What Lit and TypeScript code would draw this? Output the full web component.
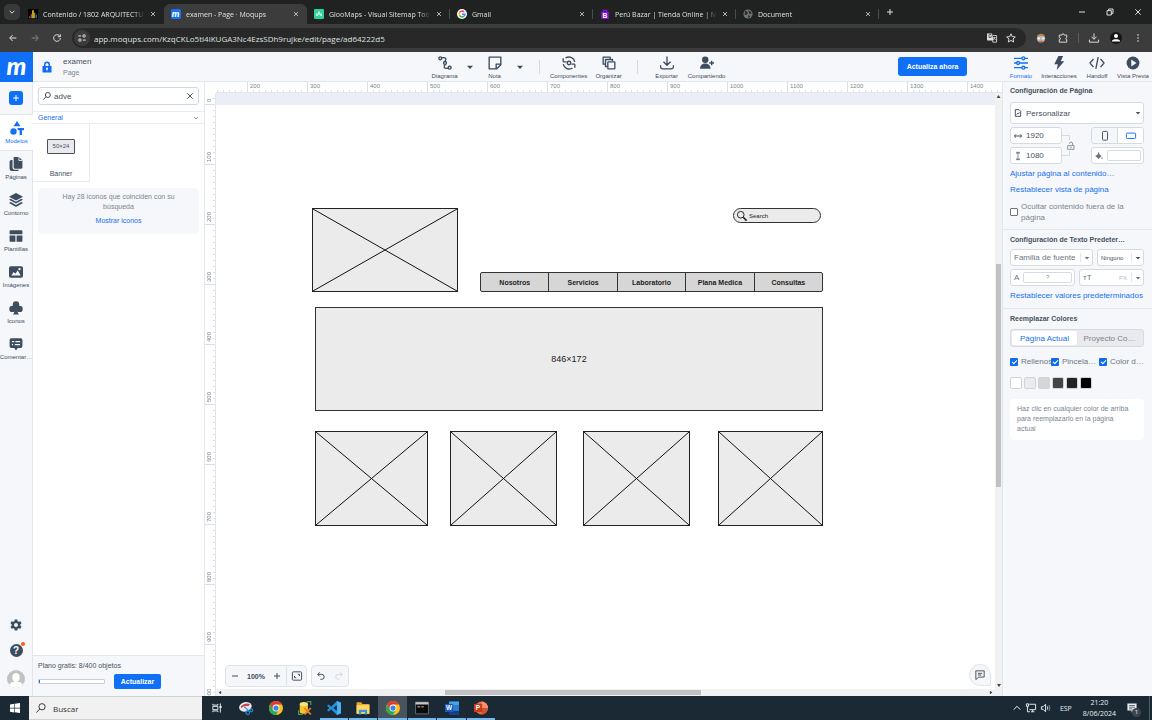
import { LitElement, html, css, svg, nothing } from "lit";
import { customElement } from "lit/decorators.js";
import { classMap } from "lit/directives/class-map.js";
import { styleMap } from "lit/directives/style-map.js";

const glyphs: Record<string, unknown> = {
  chevron: svg`<path class="ln" d="M5 8.500l7 7 7-7"/>`,
  close: svg`<path class="ln" d="M4 4l16 16M20 4L4 20"/>`,
  plus: svg`<path class="ln" d="M12 3v18M3 12h18"/>`,
  minus: svg`<path class="ln" d="M3 12h18"/>`,
  restore: svg`<path class="ln" d="M3 8h13v13H3zM8 8V3h13v13h-5"/>`,
  back: svg`<path class="ln" d="M22 12H3M11 3l-9 9 9 9"/>`,
  forward: svg`<path class="ln" d="M2 12h19M13 3l9 9-9 9"/>`,
  reload: svg`<path class="ln" d="M20 12a8 8 0 1 1-2.500-5.800L20 9M20 3v6h-6"/>`,
  tune: svg`<path class="ln" d="M3 7h7M14 17h7"/><circle class="ln" cx="17" cy="7" r="3"/><circle class="ln" cx="7" cy="17" r="3"/>`,
  star: svg`<path class="ln" d="M12 2l3 6.800 7.400.7-5.600 4.900 1.700 7.200-6.500-3.800-6.500 3.800 1.700-7.200-5.600-4.900 7.400-.7z"/>`,
  translate: svg`<path d="M0 1h12l4 17H2a2 2 0 0 1-2-2z"/><path class="ln thin" d="M14 6h9v16h-9l-1-4M15 11h6M18 10c0 4-2 5-3 6M17 13l4 4"/><text x="3" y="13" class="tiny">G</text>`,
  puzzle: svg`<path class="ln" d="M3 5h6c0-4 6-4 6 0h6v6c-3 0-3 5 0 5v6H3v-6c4 0 4-5 0-5z"/>`,
  download: svg`<path class="ln" d="M12 1v14M6 9l6 6 6-6M1 16v6h22v-6"/>`,
  dots: svg`<circle cx="12" cy="3" r="2.500"/><circle cx="12" cy="12" r="2.500"/><circle cx="12" cy="21" r="2.500"/>`,
  profile: svg`<circle cx="12" cy="12" r="12" fill="#151716"/><circle cx="12" cy="8" r="4" fill="#fff"/><path fill="#fff" d="M4 18c0-5 16-5 16 0v1H4z"/>`,
  face: svg`<circle cx="12" cy="13" r="10" fill="#e9b28c"/><path fill="#b9834d" d="M2 11C2-1 22-1 22 11l-5-4H7z"/><circle cx="7" cy="13" r="4" fill="#eef8fc" stroke="#62a9c2" stroke-width="1.500"/><circle cx="17" cy="13" r="4" fill="#eef8fc" stroke="#62a9c2" stroke-width="1.500"/><path d="M8 20h8" stroke="#b44" stroke-width="2"/>`,
  lock: svg`<path d="M3 10h18v13H3z"/><path class="ln" d="M7.500 11V7a4.500 4.500 0 0 1 9 0v4"/><circle cx="12" cy="15" r="2" fill="#fff"/><path fill="#fff" d="M11 15h2v4h-2z"/>`,
  unlock: svg`<path class="ln" d="M2 11h19v11H2zM17 10V6a5 5 0 0 0-10-1M12 14v5"/>`,
  shapes: svg`<path d="M12 0l6 9H6z"/><circle cx="6" cy="18" r="5.500"/><path d="M13 12h11v4h-3.500v8h-4v-8H13z"/>`,
  pages: svg`<path d="M8 0h9l6 6v12a2 2 0 0 1-2 2H10a2 2 0 0 1-2-2z"/><path d="M6 5H4a3 3 0 0 0-3 3v12a4 4 0 0 0 4 4h9a3 3 0 0 0 3-2H10a4 4 0 0 1-4-4z"/><path d="M17 0v6h6" fill="none" stroke="#f5f7fa" stroke-width="1.500"/>`,
  layers: svg`<path d="M12 0l12 6.500L12 13 0 6.500z"/><path d="M0 11.500L3 10l9 5 9-5 3 1.500L12 18z"/><path d="M0 17l3-1.500 9 5 9-5 3 1.500L12 24z"/>`,
  template: svg`<path d="M3 2h18a2 2 0 0 1 2 2v5H1V4a2 2 0 0 1 2-2zM1 11h10v11H3a2 2 0 0 1-2-2zM13 11h10v9a2 2 0 0 1-2 2h-8z"/>`,
  image: svg`<rect x="0" y="2" width="24" height="20" rx="3"/><path fill="#f5f7fa" d="M4 18l4-6 3 3 4-6 5 9z"/><circle cx="18" cy="7" r="2" fill="#f5f7fa"/>`,
  club: svg`<circle cx="12" cy="6" r="5.500"/><circle cx="6" cy="13.500" r="5.500"/><circle cx="18" cy="13.500" r="5.500"/><path d="M10 10h4c0 6 0 9 3 13H7c3-4 3-7 3-13z"/>`,
  comments: svg`<path d="M4 2h16a3 3 0 0 1 3 3v11a3 3 0 0 1-3 3h-5l-3 4-3-4H4a3 3 0 0 1-3-3V5a3 3 0 0 1 3-3z"/><path stroke="#f5f7fa" stroke-width="2.400" d="M5 8h4M11 8h8M5 13h2M10 13h9"/>`,
  gear: svg`<path fill-rule="evenodd" d="M9.500 1h5l.8 3.300 2.100 1.200 3.300-1 2.300 4.100-2.400 2.400v2l2.400 2.400-2.300 4.100-3.300-1-2.100 1.200-.8 3.300h-5l-.8-3.300-2.100-1.200-3.300 1L1 15.400 3.400 13v-2L1 8.600l2.300-4.100 3.300 1 2.100-1.200zM12 8a4 4 0 1 0 0 8 4 4 0 0 0 0-8z"/>`,
  avatar: svg`<circle cx="12" cy="12" r="12" fill="#c2c2c2"/><ellipse cx="12" cy="10" rx="5" ry="6" fill="#fff"/><path fill="#fff" d="M3 20c2-5 5-4 9-4s7-1 9 4a12 12 0 0 1-18 0z"/>`,
  search: svg`<circle class="ln" cx="14.500" cy="9" r="7.500"/><path class="ln" d="M9 14.500L1 23"/>`,
  searchR: svg`<circle class="ln" cx="9" cy="9" r="8"/><path class="ln thick" d="M15 15l8 8"/>`,
  caret: svg`<path d="M3 8h18l-9 10z"/>`,
  diagram: svg`<circle class="ln" cx="4" cy="4" r="2.500"/><circle class="ln" cx="12" cy="12" r="2.500"/><circle class="ln" cx="20" cy="20" r="2.500"/><path class="ln" d="M7 3c7-1 8 2 5 6M12 15c-3 4-2 7 5 6"/>`,
  note: svg`<path class="ln" d="M2 2h20v13l-7 7H2zM22 14h-8v8"/>`,
  component: svg`<circle class="ln" cx="12" cy="12" r="3"/><path class="ln" d="M6 3.500a10.500 10.500 0 0 1 16 6.500M18 20.500A10.500 10.500 0 0 1 2 14M2 10V4M2 10h6M22 14v6M22 14h-6"/>`,
  organize: svg`<path class="ln" d="M5 14H2V2h12v3M9 18H6V6h12v3"/><rect class="ln" x="10" y="10" width="12" height="12" rx="1"/>`,
  export: svg`<path class="ln" d="M12 1v14M6 10l6 6 6-6M1 16c0 5 0 6 5 6h12c5 0 5-1 5-6"/>`,
  share: svg`<circle cx="9" cy="6.500" r="5.500"/><path d="M0 22c0-12 18-12 18 0z"/><path class="ln" d="M20 8v8M16 12h8"/>`,
  format: svg`<path class="ln" d="M0 4h24M0 12h24M0 20h24"/><circle class="ln fill" cx="16" cy="4" r="2.500"/><circle class="ln fill" cx="7" cy="12" r="2.500"/><circle class="ln fill" cx="16" cy="20" r="2.500"/>`,
  bolt: svg`<path d="M11 0h8l-4 9h6L8 24l2-10H4z"/>`,
  code: svg`<path class="ln" d="M6 5l-6 7 6 7M18 5l6 7-6 7M14 2l-4 20"/>`,
  play: svg`<circle cx="12" cy="12" r="11"/><path fill="#f5f7fa" d="M9 6l9 6-9 6z"/>`,
  file: svg`<path class="ln" d="M4 2h11l5 5v15H4zM8 17l3-4 2 2 3-5"/>`,
  width: svg`<path class="ln" d="M1 12h22M6 7l-5 5 5 5M18 7l5 5-5 5"/>`,
  height: svg`<path class="ln thin" d="M12 2v20M7 6l5-5 5 5M7 18l5 5 5-5M6 1h12M6 23h12"/>`,
  portrait: svg`<rect class="ln" x="6" y="1" width="12" height="21" rx="2"/>`,
  landscape: svg`<rect class="ln" x="1" y="5" width="22" height="13" rx="2"/>`,
  bucket: svg`<path d="M2 13L11 4l8 9-8 8z"/><path class="ln" d="M11 1v7M2 12h17"/><path d="M21 15l2 4a2 2 0 0 1-4 0z"/>`,
  fit: svg`<rect class="ln" x="1" y="2" width="22" height="20" rx="2"/><path class="ln" d="M14 8h4v4M10 16H6v-4"/>`,
  undo: svg`<path class="ln" d="M8 1L2 7l6 6M3 7h11a7.500 7.500 0 1 1 0 15h-4"/>`,
  redo: svg`<path class="ln" d="M16 1l6 6-6 6M21 7H10a7.500 7.500 0 1 0 0 15h4"/>`,
  chat: svg`<path class="ln" d="M2 2h20v15H9l-7 6zM7 8h10M7 12h8"/>`,
  windows: svg`<path d="M0 3.500L10 2v9.500H0zM11.500 1.800L24 0v11.500H11.500zM0 13h10v9.500L0 21zM11.500 13H24v11l-12.500-1.800z"/>`,
  taskview: svg`<path class="ln" d="M2 2v3h12V2M2 22v-3h12v3M2 8h12v8H2zM20 1v22"/><path d="M18 7h5v5h-5z"/>`,
  up: svg`<path class="ln" d="M2 17l10-10 10 10"/>`,
  network: svg`<path class="ln" d="M8 3h15v13H8M12 21h8M16 16v5M1 2h5v6H1zM3.500 8v13h6"/>`,
  sound: svg`<path class="ln" d="M1 9h4l6-6v18l-6-6H1zM15 8q3 4 0 8"/><path class="ln" opacity=".5" d="M19 5q5 7 0 14"/>`,
  notify: svg`<path d="M1 1h22v17h-7l-5 5v-5H1z"/><path stroke="#1b2935" stroke-width="1.500" d="M5 6h14M5 10h14M5 14h8"/>`,
  chrome: svg`<circle cx="12" cy="12" r="12" fill="#fbc116"/><path fill="#e33b2e" d="M1.600 6A12 12 0 0 1 22.400 6H12l-5 9z"/><path fill="#2da94f" d="M1.600 6A12 12 0 0 0 12 24l5-9-10 0z"/><circle cx="12" cy="12" r="5.800" fill="#fff"/><circle cx="12" cy="12" r="4.500" fill="#3f82ee"/>`,
  snip: svg`<ellipse cx="11" cy="10" rx="11" ry="8" fill="#e8e8ea" transform="rotate(-15 11 10)"/><path d="M3 9q7-7 16-4l-3 4q-6-2-12 3z" fill="#c9474d"/><circle cx="15" cy="20" r="3" fill="none" stroke="#2788d2" stroke-width="2"/><circle cx="21" cy="16" r="2.500" fill="none" stroke="#2788d2" stroke-width="2"/><path d="M9 10l8 7" stroke="#2788d2" stroke-width="2"/>`,
  db: svg`<path d="M3 5v14c0 4 14 4 14 0V5z" fill="#f3c535"/><ellipse cx="10" cy="5" rx="7" ry="3.500" fill="#ffe27a"/><path d="M15 1h7v6M1 16v7h7" fill="none" stroke="#4d9b3f" stroke-width="2"/><path d="M11 12l11 11M22 12L11 23" stroke="#ef7d22" stroke-width="3"/>`,
  vscode: svg`<path fill="#2490dc" d="M17 0l7 3v18l-7 3L7 14l-4 4-3-2 4-4-4-4 3-2 4 4zM17.500 7L11 12l6.500 5z" fill-rule="evenodd"/><path fill="#47b3f4" d="M17 0l7 3v18l-7 3z"/>`,
  folder: svg`<path fill="#e8a72c" d="M1 2h8l2 3h12v17H1z"/><path fill="#ffd765" d="M1 7h22v15H1z"/><path fill="#3b96dc" d="M5 23v-8h14v8h-4v-4H9v4z"/>`,
  terminal: svg`<path fill="#0a0a0a" stroke="#9a9a9a" d="M1 2h22v20H1z"/><path fill="#c8c8c8" d="M1 2h22v4H1z"/><path stroke="#ddd" stroke-width="1.500" d="M4 10h5M11 10h4"/>`,
  word: svg`<path fill="#2b7cd3" d="M7 1h17v22H7z"/><path fill="#41a5ee" d="M7 1h17v6H7z"/><path fill="#103f91" d="M7 17h17v6H7z"/><path fill="#185abd" d="M0 5h14v14H0z"/><text x="1.500" y="16" class="badge">W</text>`,
  ppt: svg`<circle cx="13" cy="12" r="11" fill="#ed6c47"/><path d="M13 1a11 11 0 0 1 11 11H13z" fill="#ff8f6b"/><path d="M13 23a11 11 0 0 0 11-11H13z" fill="#d35230"/><path fill="#c43e1c" d="M0 5h14v14H0z"/><text x="3" y="16" class="badge">P</text>`,
  favBars: svg`<path fill="#000" d="M0 0h24v24H0z"/><path stroke="#1b9e8a" stroke-width="3" d="M4 22v-4"/><path stroke="#e23d2e" stroke-width="3" d="M8 22V12"/><path stroke="#f5b921" stroke-width="4" d="M12 22V3"/><path stroke="#6cb23f" stroke-width="3" d="M16 22V9"/><path stroke="#4a55c4" stroke-width="3" d="M20 22v-8"/>`,
  favMoqups: svg`<rect width="24" height="24" rx="4" fill="#1273f8"/><text x="2" y="18" class="logo">m</text>`,
  favGloo: svg`<rect width="24" height="24" rx="3" fill="#2fd39a"/><path fill="#c8f7e4" d="M10 6h4v5h5v6h-4v-3H9v3H5v-6h5z"/>`,
  favGoogle: svg`<circle cx="12" cy="12" r="12" fill="#fff"/><g fill="none" stroke-width="3.500"><path stroke="#ea4335" d="M6 8.500A7 7 0 0 1 17 7"/><path stroke="#fbbc05" d="M6 8.500a7 7 0 0 0 0 7"/><path stroke="#34a853" d="M6 15.500A7 7 0 0 0 17 17"/><path stroke="#4285f4" d="M17 17q2-2 2-4.500h-7"/></g>`,
  favBazar: svg`<path fill="#8a10ea" d="M3 7h18v17H3z"/><path fill="none" stroke="#8a10ea" stroke-width="3" d="M8 8V3h8v5"/><text x="6" y="21" class="bazar">B</text>`,
  favGlobe: svg`<circle cx="12" cy="12" r="11" fill="#6f7376"/><path fill="#2a2d2d" d="M5 5q7 1 6 6t-7 3M13 3q7 3 8 8l-6 1zM12 15l6 2-5 5z"/>`,
};

const icon = (name: string, cls = "") =>
  html`<svg class="icon ${cls}" viewBox="0 0 24 24" aria-hidden="true">${glyphs[name]}</svg>`;

const shared = css`
  *, *::before, *::after { box-sizing: border-box; }
  :host { box-sizing: border-box; font-family: "Liberation Sans", Arial, sans-serif; color: #46515f; }
  button { font: inherit; color: inherit; background: none; border: 0; padding: 0; margin: 0; display: inline-flex; align-items: center; justify-content: center; }
  a { color: #1670f0; text-decoration: none; }
  input, select { font: inherit; color: inherit; margin: 0; padding: 0; border: 0; background: none; outline: 0; min-width: 0; appearance: none; border-radius: 0; }
  .icon { width: 12px; height: 12px; flex: none; fill: currentColor; display: block; overflow: visible; }
  .icon.s6 { width: 6px; height: 6px; }
  .icon.s8 { width: 8px; height: 8px; }
  .icon.s10 { width: 10px; height: 10px; }
  .icon.s14 { width: 14px; height: 14px; }
  .icon.s18 { width: 18px; height: 18px; }
  .ln { fill: none; stroke: currentColor; stroke-width: 3; stroke-linejoin: round; }
  .s14 .ln, .s10 .ln { stroke-width: 2.3; }
  .ln.thin { stroke-width: 2; }
  .s10 .ln.thick { stroke-width: 4; }
  .ln.fill { fill: #f5f7fa; }
  .tiny { font: bold 11px "Liberation Sans", sans-serif; fill: #3b3b3b; }
  .badge { font: bold 11px "Liberation Sans", sans-serif; fill: #fff; }
  .bazar { font: bold 16px "Liberation Sans", sans-serif; fill: #fff; }
  .logo { font: italic 900 23px Lato, sans-serif; fill: #fff; }
`;

@customElement("browser-chrome")
class BrowserChrome extends LitElement {
  static styles = [shared, css`
    :host { display: block; flex: none; font-family: "Open Sans", sans-serif; color: #dfe1e0; background: #1f2221; }
    .strip { display: flex; align-items: center; height: 24px; }
    .list { width: 16px; height: 16px; margin: 0 1px 0 4px; border-radius: 5px; background: #373a39; }
    .tab { flex: 0 1 143px; min-width: 0; height: 20px; display: flex; align-items: center; gap: 5px; padding: 0 8px 0 7px; margin-top: 4px; font-size: 7px; border-radius: 6px 6px 0 0; position: relative; }
    .tab.active { background: #3c3c3c; }
    .tab.line::after { content: ""; width: 1px; height: 10px; background: #4a4d4c; position: absolute; right: 0; }
    .name { flex: 1; min-width: 0; white-space: nowrap; overflow: hidden; mask-image: linear-gradient(90deg, #000 88%, transparent); }
    .new { width: 22px; height: 20px; }
    .window { margin-left: auto; display: flex; }
    .window button { width: 28px; height: 24px; }
    .bar { height: 28px; background: #3c3c3c; display: flex; align-items: center; padding-left: 2px; }
    .nav { width: 22px; height: 22px; }
    .dim { color: #858585; }
    .omni { flex: 1; height: 20px; margin-left: 4px; padding: 0 10px 0 2px; border-radius: 10px; background: #282828; display: flex; align-items: center; gap: 9px; }
    .site { width: 16px; height: 16px; border-radius: 8px; background: #3c3c3c; }
    .url { flex: 1; font-size: 8px; margin-left: -5px; }
    .ext { display: flex; align-items: center; padding: 0 3px 0 4px; }
    .ext button { width: 22px; height: 22px; }
    .sep { width: 1px; height: 10px; background: #5c5c5c; margin: 0 4px; }
  `];
  private tabs = [
    ["favBars", "Contenido / 1802 ARQUITECTU"],
    ["favMoqups", "examen - Page · Moqups"],
    ["favGloo", "GlooMaps - Visual Sitemap Too"],
    ["favGoogle", "Gmail"],
    ["favBazar", "Perú Bazar | Tienda Online | Me"],
    ["favGlobe", "Document"],
  ];
  render() {
    return html`
      <div class="strip">
        <button class="list" aria-label="Buscar pestañas">${icon("chevron", "s8")}</button>
        ${this.tabs.map(([fav, name], i) => html`
          <div class=${classMap({ tab: true, active: i === 1, line: i > 1 })}>
            ${icon(fav, "s10")}<span class="name">${name}</span>
            <button aria-label="Cerrar ${name}">${icon("close", "s6")}</button>
          </div>`)}
        <button class="new" aria-label="Nueva pestaña">${icon("plus", "s8")}</button>
        <div class="window">
          <button aria-label="Minimizar">${icon("minus", "s8")}</button>
          <button aria-label="Restaurar">${icon("restore", "s8")}</button>
          <button aria-label="Cerrar">${icon("close", "s8")}</button>
        </div>
      </div>
      <div class="bar">
        <button class="nav" aria-label="Atrás">${icon("back", "s8")}</button>
        <button class="nav dim" aria-label="Adelante">${icon("forward", "s8")}</button>
        <button class="nav" aria-label="Recargar">${icon("reload", "s10")}</button>
        <div class="omni">
          <button class="site" aria-label="Información del sitio">${icon("tune", "s10")}</button>
          <input class="url" aria-label="Dirección" .value=${"app.moqups.com/KzqCKLo5tl4iKUGA3Nc4EzsSDh9rujke/edit/page/ad64222d5"} />
          <button aria-label="Traducir">${icon("translate", "s10")}</button>
          <button aria-label="Favorito">${icon("star", "s10")}</button>
        </div>
        <div class="ext">
          <button aria-label="Extensión">${icon("face", "s10")}</button>
          <button aria-label="Extensiones">${icon("puzzle", "s10")}</button>
          <span class="sep"></span>
          <button aria-label="Descargas">${icon("download", "s10")}</button>
          <button aria-label="Perfil">${icon("profile")}</button>
          <button aria-label="Menú">${icon("dots", "s8")}</button>
        </div>
      </div>`;
  }
}

@customElement("editor-header")
class EditorHeader extends LitElement {
  static styles = [shared, css`
    :host { display: flex; flex: none; height: 30px; background: #f5f7fa; border-bottom: 1px solid #e2e7ee; font-size: 6px; color: #3d4c5f; }
    .brand { width: 33px; height: 30px; flex: none; background: #0f70f7; color: #fff; display: flex; align-items: center; justify-content: center; font: italic 900 25px/24px Lato, sans-serif; padding-bottom: 4px; }
    .doc { flex: 9 1 0; display: flex; align-items: center; gap: 10px; padding-left: 8px; }
    .doc .icon { color: #0f6cf2; }
    .title { font-size: 8px; line-height: 11px; color: #46515f; }
    .kind { font-size: 7px; line-height: 11px; color: #7b8591; }
    .tools { display: flex; align-items: center; }
    .first { padding-right: 4px; display: flex; }
    .tool { flex-direction: column; gap: 2px; width: 40px; height: 29px; padding-top: 2px; line-height: 8px; white-space: nowrap; }
    .narrow { width: 36px; }
    .more { width: 14px; height: 29px; }
    .sep { width: 1px; height: 14px; background: #d5dae1; margin: 0 9px 0 8px; }
    .space { flex: 4 1 0; }
    .upgrade { width: 69px; height: 19px; margin: 5px 36px 0 0; border-radius: 3px; background: #0f70f7; color: #fff; font-weight: bold; font-size: 7px; }
    .modes { display: flex; width: 149px; flex: none; }
    .on { color: #1670f0; }
  `];
  private tool(glyph: string, label: string, cls = "") {
    return html`<button class="tool ${cls}">${icon(glyph, "s14")}<span>${label}</span></button>`;
  }
  render() {
    return html`
      <a class="brand" href="#" aria-label="Moqups">m</a>
      <div class="doc">${icon("lock", "")}<div><div class="title">examen</div><div class="kind">Page</div></div></div>
      <div class="tools">
        <div class="first">
          ${this.tool("diagram", "Diagrama", "narrow")}
          <button class="more" aria-label="Más diagramas">${icon("caret", "s8")}</button>
          ${this.tool("note", "Nota", "narrow")}
          <button class="more" aria-label="Más notas">${icon("caret", "s8")}</button>
        </div>
        <span class="sep"></span>
        ${this.tool("component", "Componentes")}${this.tool("organize", "Organizar")}
        <span class="sep"></span>
        ${this.tool("export", "Exportar")}${this.tool("share", "Compartiendo")}
      </div>
      <div class="space"></div>
      <button class="upgrade">Actualiza ahora</button>
      <div class="modes">
        ${this.tool("format", "Formato", "narrow on")}${this.tool("bolt", "Interacciones")}
        ${this.tool("code", "Handoff", "narrow")}${this.tool("play", "Vista Previa", "narrow")}
      </div>`;
  }
}

@customElement("side-rail")
class SideRail extends LitElement {
  static styles = [shared, css`
    :host { display: flex; flex-direction: column; width: 33px; flex: none; background: #f5f7fa; border-right: 1px solid #e2e7ee; color: #3d4c5f; font-size: 6px; }
    .add { height: 33px; border-bottom: 1px solid #e2e7ee; }
    .add span { width: 14px; height: 14px; border-radius: 3px; background: #0f70f7; color: #fff; display: flex; align-items: center; justify-content: center; }
    .item { height: 36px; flex-direction: column; gap: 2px; line-height: 8px; white-space: nowrap; }
    .on { background: #fff; color: #1670f0; border-bottom: 1px solid #e2e7ee; width: 33px; }
    .foot { margin-top: auto; display: flex; flex-direction: column; align-items: center; gap: 13px; padding-bottom: 8px; }
    .help { width: 13px; height: 13px; border-radius: 50%; background: #3d4c5f; color: #fff; font-size: 10px; font-weight: bold; position: relative; }
    .help::after { content: ""; position: absolute; right: -2px; top: -2px; width: 4px; height: 4px; border-radius: 50%; background: #ff5a1f; }
  `];
  private items = [["shapes", "Modelos"], ["pages", "Páginas"], ["layers", "Contorno"], ["template", "Plantillas"], ["image", "Imágenes"], ["club", "Iconos"], ["comments", "Comentar…"]];
  render() {
    return html`
      <button class="add" aria-label="Añadir"><span>${icon("plus", "s8")}</span></button>
      ${this.items.map(([g, label], i) => html`<button class=${classMap({ item: true, on: i === 0 })}>${icon(g, "s14")}<span>${label}</span></button>`)}
      <div class="foot">
        <button aria-label="Ajustes">${icon("gear")}</button>
        <button class="help" aria-label="Ayuda">?</button>
        <button aria-label="Cuenta">${icon("avatar", "s18")}</button>
      </div>`;
  }
}

@customElement("stencil-panel")
class StencilPanel extends LitElement {
  static styles = [shared, css`
    :host { display: flex; flex-direction: column; width: 172px; flex: none; background: #fff; border-right: 1px solid #e2e7ee; font-size: 7px; }
    .find { display: flex; align-items: center; gap: 3px; height: 18px; margin: 5px 5px 6px; padding: 0 4px; border: 1px solid #d3d8df; border-radius: 3px; font-size: 8px; }
    .find input { flex: 1; }
    .group { height: 13px; display: flex; justify-content: space-between; align-items: center; padding: 0 5px; border-top: 1px solid #e8ecf1; border-bottom: 1px solid #e8ecf1; color: #1670f0; }
    .group .icon { color: #46515f; }
    .card { width: 57px; height: 58px; flex-direction: column; justify-content: flex-end; gap: 15px; padding-bottom: 2px; line-height: 10px; border-right: 1px solid #e8ecf1; border-bottom: 1px solid #e8ecf1; }
    .thumb { width: 28px; height: 15px; border: 1px solid #46515f; border-radius: 1px; background: #e9e9ee; font-size: 6px; line-height: 13px; }
    .hint { margin: 6px 5px; padding: 4px 20px 8px; height: 46px; border-radius: 4px; background: #f5f7fa; color: #7b8591; text-align: center; line-height: 10px; }
    .hint a { display: block; margin-top: 4px; }
    .plan { margin-top: auto; height: 41px; padding: 5px; border-top: 1px solid #e2e7ee; background: #f5f7fa; line-height: 9px; }
    .row { display: flex; align-items: center; gap: 9px; margin-top: 4px; }
    .meter { width: 67px; height: 5px; border: 1px solid #c8ced7; border-radius: 1px; background: #fff; }
    .meter i { display: block; height: 3px; background: #1670f0; }
    .up { width: 47px; height: 15px; border-radius: 2px; background: #0f70f7; color: #fff; font-weight: bold; }
  `];
  render() {
    return html`
      <div class="find">${icon("search", "s8")}<input aria-label="Buscar modelos" .value=${"adve"} /><button aria-label="Borrar">${icon("close", "s8")}</button></div>
      <button class="group"><span>General</span>${icon("chevron", "s6")}</button>
      <button class="card"><span class="thumb">50×24</span><span>Banner</span></button>
      <div class="hint">Hay 28 iconos que coinciden con su búsqueda<a href="#">Mostrar iconos</a></div>
      <div class="plan">Plano gratis: 8/400 objetos
        <div class="row"><div class="meter"><i style=${styleMap({ width: `${(8 / 400) * 100}%` })}></i></div><button class="up">Actualizar</button></div>
      </div>`;
  }
}

type Node = { kind: "image" | "box" | "menu" | "search"; x: number; y: number; w: number; h: number; text?: string };

@customElement("design-stage")
class DesignStage extends LitElement {
  static styles = [shared, css`
    :host { flex: 1; min-width: 0; display: grid; grid-template-columns: 11px 1fr 7px; grid-template-rows: 11px 1fr 7px; background: #fff; position: relative; overflow: hidden; }
    .rx { grid-column: 2 / 4; display: flex; overflow: hidden; padding-left: 31px; border-bottom: 1px solid #e2e7ee; background: repeating-linear-gradient(90deg, #d9dee6 0 1px, transparent 1px 6px) 1px 8px / 100% 3px no-repeat; font-size: 6px; line-height: 8px; color: #7b8591; }
    .rx span { width: 60px; flex: none; padding-left: 2px; border-left: 1px solid #d9dee6; }
    .ry { grid-row: 2 / 4; min-height: 0; overflow: hidden; border-right: 1px solid #e2e7ee; background: repeating-linear-gradient(#d9dee6 0 1px, transparent 1px 6px) 8px 5px / 3px 100% no-repeat; font-size: 6px; line-height: 8px; color: #7b8591; }
    .ry span { display: block; height: 60px; width: 10px; writing-mode: vertical-rl; transform: rotate(180deg); padding-top: 2px; border-top: 1px solid #d9dee6; }
    .ry .zero { height: 12px; }
    .view { min-width: 0; overflow: hidden; display: flex; flex-direction: column; }
    .band { height: 12px; flex: none; background: #ebeff5; }
    .page { flex: 1; position: relative; background: #fff; color: #222; }
    .node { position: absolute; }
    .image { background: #ebebeb; border: 1px solid #222; }
    .image svg { width: 100%; height: 100%; display: block; }
    .image line { stroke: #111; vector-effect: non-scaling-stroke; }
    .box { background: #ebebeb; border: 1px solid #333; display: flex; align-items: center; justify-content: center; font-size: 9px; }
    .menu { background: #d6d6d6; border: 1px solid #333; border-radius: 2px; display: flex; font-size: 7px; font-weight: bold; }
    .menu a { flex: 1; color: #222; display: flex; align-items: center; justify-content: center; }
    .menu a + a { border-left: 1px solid #333; }
    .search { background: #ebebeb; border: 1px solid #333; border-radius: 8px; display: flex; align-items: center; gap: 2px; padding: 0 4px 0 3px; font-size: 6px; }
    .search input { flex: 1; }
    .search input::placeholder { color: #222; opacity: 1; }
    .bar { background: #f1f1f1; display: flex; align-items: center; }
    .v { flex-direction: column; padding: 2px 0; justify-content: space-between; }
    .h { grid-column: 2 / 4; padding: 0 9px 0 2px; justify-content: space-between; }
    .track { flex: 1; }
    .v .track { width: 5px; display: flex; flex-direction: column; align-items: stretch; }
    .v .track::before { content: ""; flex: 166 1 0; }
    .v .track i { flex: 224 1 0; background: #c1c1c1; }
    .v .track::after { content: ""; flex: 197 1 0; }
    .h .track { height: 5px; display: flex; }
    .h .track::before { content: ""; flex: 224 1 0; }
    .h .track i { flex: 256 1 0; background: #c1c1c1; }
    .h .track::after { content: ""; flex: 289 1 0; }
    .arrow { width: 4px; height: 3px; background: #444; clip-path: polygon(50% 0, 100% 100%, 0 100%); }
    .arrow.down { transform: rotate(180deg); }
    .arrow.left { transform: rotate(-90deg); }
    .arrow.right { transform: rotate(90deg); }
    .float { position: absolute; left: 20px; bottom: 9px; display: flex; gap: 4px; color: #3d4c5f; }
    .pill { height: 22px; border: 1px solid #dfe4eb; border-radius: 4px; background: #f5f7fa; display: flex; }
    .pill button { width: 18px; }
    .pill .pct { width: 24px; font-size: 7px; }
    .pill .fit { width: 20px; border-left: 1px solid #dfe4eb; }
    .faint { color: #d2d8e0; }
    .chat { position: absolute; right: 11px; bottom: 10px; width: 22px; height: 22px; border: 1px solid #dfe4eb; border-radius: 11px 11px 2px 11px; background: #f5f7fa; }
  `];
  private nodes: Node[] = [
    { kind: "image", x: 96, y: 103, w: 146, h: 84 },
    { kind: "search", x: 517, y: 103, w: 88, h: 15 },
    { kind: "menu", x: 264, y: 167, w: 343, h: 20 },
    { kind: "box", x: 99, y: 202, w: 508, h: 104, text: "846×172" },
    { kind: "image", x: 99, y: 326, w: 113, h: 95 },
    { kind: "image", x: 234, y: 326, w: 107, h: 95 },
    { kind: "image", x: 367, y: 326, w: 107, h: 95 },
    { kind: "image", x: 502, y: 326, w: 105, h: 95 },
  ];
  private content(n: Node) {
    switch (n.kind) {
      case "image":
        return html`<svg viewBox="0 0 100 100" preserveAspectRatio="none"><line x1="0" y1="0" x2="100" y2="100"/><line x1="0" y1="100" x2="100" y2="0"/></svg>`;
      case "menu":
        return ["Nosotros", "Servicios", "Laboratorio", "Plana Medica", "Consultas"].map((t) => html`<a href="#">${t}</a>`);
      case "search":
        return html`${icon("searchR", "s10")}<input aria-label="Search" placeholder="Search" />`;
      default:
        return n.text ?? nothing;
    }
  }
  render() {
    const xs = Array.from({ length: 13 }, (_, i) => 200 + i * 100);
    const ys = Array.from({ length: 10 }, (_, i) => 100 + i * 100);
    return html`
      <div></div>
      <div class="rx">${xs.map((n) => html`<span>${n}</span>`)}</div>
      <div class="ry"><span class="zero">0</span>${ys.map((n) => html`<span>${n}</span>`)}</div>
      <div class="view">
        <div class="band"></div>
        <div class="page">
          ${this.nodes.map((n) => html`<div class="node ${n.kind}" style=${styleMap({ left: `${n.x}px`, top: `${n.y}px`, width: `${n.w}px`, height: `${n.h}px` })}>${this.content(n)}</div>`)}
        </div>
      </div>
      <div class="bar v"><span class="arrow"></span><div class="track"><i></i></div><span class="arrow down"></span></div>
      <div class="bar h"><span class="arrow left"></span><div class="track"><i></i></div><span class="arrow right"></span></div>
      <div class="float">
        <div class="pill">
          <button aria-label="Alejar">${icon("minus", "s8")}</button><button class="pct"><b>100%</b></button>
          <button aria-label="Acercar">${icon("plus", "s8")}</button><button class="fit" aria-label="Ajustar">${icon("fit", "s10")}</button>
        </div>
        <div class="pill"><button aria-label="Deshacer">${icon("undo", "s8")}</button><button class="faint" aria-label="Rehacer">${icon("redo", "s8")}</button></div>
      </div>
      <button class="chat" aria-label="Chat">${icon("chat", "s10")}</button>`;
  }
}

@customElement("format-panel")
class FormatPanel extends LitElement {
  static styles = [shared, css`
    :host { display: block; width: 150px; flex: none; background: #f5f7fa; border-left: 1px solid #e2e7ee; font-size: 8px; }
    section { padding: 3px 8px 6px 7px; border-bottom: 1px solid #e2e7ee; }
    section + section { padding-top: 4px; }
    section:last-child { border: 0; }
    h2 { margin: 0; font-size: 7px; line-height: 12px; color: #46515f; white-space: nowrap; }
    .field { display: flex; align-items: center; background: #fff; border: 1px solid #d6dbe3; border-radius: 3px; height: 17px; padding: 0 2px 0 3px; gap: 4px; color: #6c7682; min-width: 0; }
    .field input, .field select { flex: 1; width: 100%; }
    .field.big { height: 22px; margin: 5px 0 3px; color: #46515f; }
    .size { display: grid; grid-template-columns: 52px 1fr 53px; grid-template-rows: 17px 17px; gap: 3px 0; margin-bottom: 4px; }
    .field.num { color: #46515f; }
    .link { grid-column: 2; grid-row: 1 / 3; display: flex; align-items: center; justify-content: center; color: #8a939e; padding-right: 12px; position: relative; }
    .link::before, .link::after { content: ""; position: absolute; left: 0; width: 8px; height: 5px; border: 0 solid #d6dbe3; border-right-width: 1px; }
    .link::before { top: 8px; border-top-width: 1px; }
    .link::after { bottom: 8px; border-bottom-width: 1px; }
    .orient { display: flex; border: 1px solid #d6dbe3; border-radius: 3px; height: 17px; overflow: hidden; grid-column: 3; }
    .orient button { flex: 1; }
    .orient button + button { background: #fff; color: #1670f0; border-left: 1px solid #d6dbe3; }
    .well { flex: 1; height: 11px; border: 1px solid #d6dbe3; border-radius: 2px; text-align: center; font-size: 6px; line-height: 9px; color: #7b8591; }
    .act { display: block; line-height: 12px; margin-top: 4px; white-space: nowrap; }
    .hide { display: flex; align-items: center; gap: 3px; line-height: 11px; margin-top: 5px; color: #7b8591; }
    input[type="checkbox"] { width: 8px; height: 8px; flex: none; border: 1px solid #767676; border-radius: 1px; background: #fff; }
    .pair { display: flex; gap: 4px; margin-top: 3px; }
    .font { flex: 1 1 83px; }
    .style { flex: 0 0 47px; font-size: 6px; color: #46515f; }
    .half { flex: 1 1 0; }
    .pick { align-self: stretch; margin: 3px 0; padding-left: 3px; border-left: 1px solid #e2e7ee; display: flex; align-items: center; }
    .px { font-size: 6px; color: #b4bac3; }
    .seg { display: flex; height: 18px; margin-top: 4px; padding: 1px; border: 1px solid #d6dbe3; border-radius: 3px; background: #e9e9ee; color: #7b8591; }
    .seg button { flex: 1; white-space: nowrap; border-radius: 2px; }
    .seg .on { background: #fff; color: #1670f0; }
    .checks { display: grid; grid-template-columns: 41px 48px 1fr; margin-top: 9px; line-height: 12px; }
    .checks label { display: flex; align-items: center; gap: 3px; white-space: nowrap; color: #6c7682; }
    .checks input[type="checkbox"] { border: 0; background: #0f6cf2; display: grid; place-items: center; }
    .checks input::after { content: ""; width: 5px; height: 3px; border: solid #fff; border-width: 0 0 1px 1px; transform: translateY(-1px) rotate(-45deg); }
    .swatches { display: flex; gap: 2px; margin-top: 9px; }
    .swatch { width: 12px; height: 12px; border: 1px solid #d0d4da; border-radius: 2px; }
    .tip { margin-top: 10px; padding: 5px 12px 6px 7px; line-height: 10px; font-size: 7px; color: #7b8591; background: #fff; border-radius: 4px; }
  `];
  render() {
    const pick = html`<span class="pick">${icon("caret", "s6")}</span>`;
    return html`
      <section>
        <h2>Configuración de Página</h2>
        <div class="field big">${icon("file", "s8")}<select aria-label="Tamaño de página"><option>Personalizar</option></select>${icon("caret", "s6")}</div>
        <div class="size">
          <div class="field num">${icon("width", "s8")}<input aria-label="Ancho" .value=${"1920"} /></div>
          <button class="link" aria-label="Bloquear proporción">${icon("unlock", "s8")}</button>
          <div class="orient"><button aria-label="Vertical">${icon("portrait", "s10")}</button><button aria-label="Horizontal">${icon("landscape", "s10")}</button></div>
          <div class="field num">${icon("height", "s8")}<input aria-label="Alto" .value=${"1080"} /></div>
          <button class="field" aria-label="Color de fondo">${icon("bucket", "s8")}<span class="well"></span></button>
        </div>
        <a class="act" href="#">Ajustar página al contenido…</a>
        <a class="act" href="#">Restablecer vista de página</a>
        <label class="hide"><input type="checkbox" /><span>Ocultar contenido fuera de la página</span></label>
      </section>
      <section>
        <h2>Configuración de Texto Predeter…</h2>
        <div class="pair">
          <div class="field font"><select aria-label="Familia de fuente"><option>Familia de fuente</option></select>${pick}</div>
          <div class="field style"><select aria-label="Estilo"><option>Ninguno</option></select>${pick}</div>
        </div>
        <div class="pair">
          <button class="field half" aria-label="Color de texto"><span>A</span><span class="well">?</span></button>
          <label class="field half"><span>тT</span><input aria-label="Tamaño de texto" /><span class="px">PX</span>${pick}</label>
        </div>
        <a class="act" href="#">Restablecer valores predeterminados</a>
      </section>
      <section>
        <h2>Reemplazar Colores</h2>
        <div class="seg"><button class="on">Página Actual</button><button>Proyecto Co…</button></div>
        <div class="checks">
          ${["Rellenos", "Pincela…", "Color d…"].map((t) => html`<label><input type="checkbox" checked />${t}</label>`)}
        </div>
        <div class="swatches">
          ${["#ffffff", "#ebebeb", "#d6d6d6", "#444444", "#222222", "#000000"].map((c) => html`<button class="swatch" aria-label=${c} style=${styleMap({ background: c })}></button>`)}
        </div>
        <div class="tip">Haz clic en cualquier color de arriba para reemplazarlo en la página actual</div>
      </section>`;
  }
}

@customElement("task-bar")
class TaskBar extends LitElement {
  static styles = [shared, css`
    :host { display: flex; flex: none; height: 24px; background: #1b2935; color: #e9edf0; font-family: "Open Sans", sans-serif; font-size: 7px; }
    .start { width: 29px; color: #fff; }
    .search { width: 173px; background: #f1f1f1; color: #333; display: flex; align-items: center; gap: 7px; padding: 0 7px; font-size: 8px; border: 1px solid #d0d0d0; border-width: 1px 0; }
    .search input { flex: 1; }
    .search input::placeholder { color: #333; opacity: 1; }
    .apps { display: flex; gap: 1px; }
    .app { width: 28px; border-bottom: 2px solid transparent; padding-top: 2px; }
    .run { border-bottom-color: #76b9ed; }
    .front { background: #47535d; width: 29px; }
    .app:nth-child(1), .app:nth-child(3), .app:nth-child(9) { width: 29px; }
    .tray { margin-left: auto; display: flex; align-items: center; gap: 5px; }
    .clock { text-align: center; line-height: 11px; margin: 0 6px 0 6px; }
    .lang { margin-left: 4px; }
    .bell { position: relative; margin-right: 3px; }
    .count { position: absolute; right: -4px; bottom: -4px; width: 9px; height: 9px; border-radius: 50%; background: #3b4650; font-size: 6px; line-height: 9px; }
    .desk { width: 3px; align-self: stretch; border-left: 1px solid #4d5963; margin-left: 4px; }
  `];
  private apps = ["taskview", "snip", "chrome", "db", "vscode", "folder", "chrome", "terminal", "word", "ppt"];
  render() {
    return html`
      <button class="start" aria-label="Inicio">${icon("windows", "s10")}</button>
      <label class="search">${icon("search", "s10")}<input aria-label="Buscar" placeholder="Buscar" /></label>
      <div class="apps">
        ${this.apps.map((a, i) => html`<button aria-label=${a} class=${classMap({ app: true, run: i > 3, front: i === 6 })}>${icon(a, i ? "s14" : "s10")}</button>`)}
      </div>
      <div class="tray">
        ${icon("up", "s8")}${icon("network", "s10")}${icon("sound", "s10")}<span class="lang">ESP</span>
        <div class="clock">21:20<br />8/06/2024</div>
        <button class="bell" aria-label="Notificaciones">${icon("notify", "s10")}<span class="count">1</span></button>
        <span class="desk"></span>
      </div>`;
  }
}

@customElement("app-root")
class AppRoot extends LitElement {
  static styles = css`
    :host { display: flex; flex-direction: column; height: 100vh; overflow: hidden; }
    .work { flex: 1; min-height: 0; display: flex; }
  `;
  render() {
    return html`
      <browser-chrome></browser-chrome>
      <editor-header></editor-header>
      <main class="work">
        <side-rail></side-rail>
        <stencil-panel></stencil-panel>
        <design-stage></design-stage>
        <format-panel></format-panel>
      </main>
      <task-bar></task-bar>`;
  }
}
